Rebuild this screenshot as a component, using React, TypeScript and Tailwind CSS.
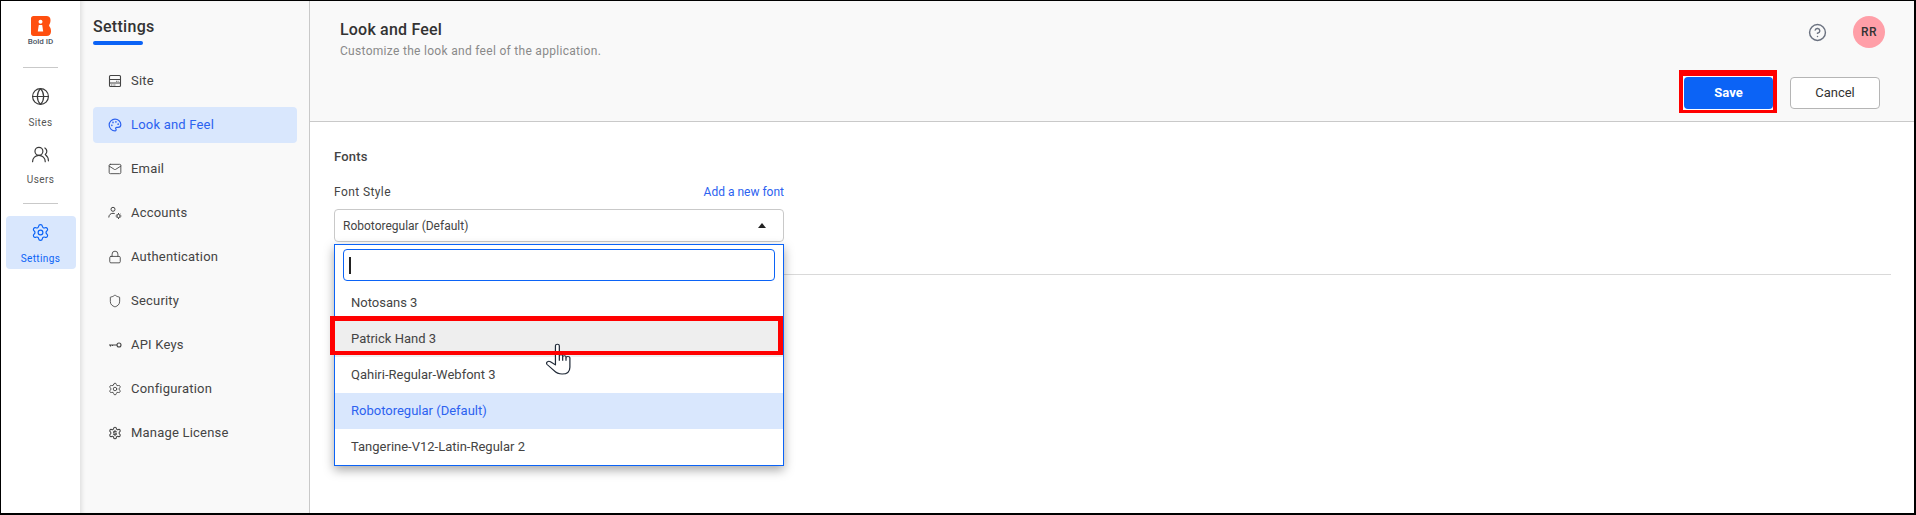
import { CircleHelp, Globe, Lock, Mail, Palette, Settings, Shield, UsersRound } from 'lucide-react';
import type { ReactNode } from 'react';

const SiteIcon = () => (
  <svg width="14" height="14" viewBox="0 0 14 14" fill="none" stroke="currentColor" strokeWidth="1.1">
    <rect x="1.5" y="1.5" width="11" height="11" rx="1" />
    <path d="M1.5 5.5h11M1.5 9h11" />
    <path d="M8 7.3h3M3 11h5" strokeDasharray="1 0.6" strokeWidth="0.8" />
  </svg>
);

const AccountsIcon = () => (
  <svg width="14" height="14" viewBox="0 0 14 14" fill="none" stroke="currentColor" strokeWidth="1">
    <circle cx="5" cy="3.3" r="2" />
    <path d="M0.8 11.5c0-2.6 1.8-4.2 4.2-4.2 0.6 0 1.2 0.1 1.7 0.3" />
    <circle cx="10.5" cy="10" r="1.6" />
    <path d="M10.5 7v1M10.5 12v1M7.6 10h1M12.4 10h1M8.5 8l0.7 0.7M11.8 11.3l0.7 0.7M8.5 12l0.7-0.7M11.8 8.7l0.7-0.7" />
  </svg>
);

const KeyIcon = () => (
  <svg width="14" height="14" viewBox="0 0 14 14" fill="none" stroke="currentColor" strokeWidth="1.1">
    <circle cx="11" cy="7" r="2" />
    <path d="M9 7H1M2.5 7v1.6M4.5 7v1" />
  </svg>
);

const LicenseIcon = () => (
  <svg width="14" height="14" viewBox="0 0 24 24" fill="none" stroke="currentColor" strokeWidth="1.8" strokeLinecap="round" strokeLinejoin="round">
    <path d="M9.67 4.14a2.34 2.34 0 0 1 4.66 0 2.34 2.34 0 0 0 3.32 1.91 2.34 2.34 0 0 1 2.33 4.04 2.34 2.34 0 0 0 0 3.82 2.34 2.34 0 0 1-2.33 4.04 2.34 2.34 0 0 0-3.32 1.91 2.34 2.34 0 0 1-4.66 0 2.34 2.34 0 0 0-3.32-1.91 2.34 2.34 0 0 1-2.33-4.04 2.34 2.34 0 0 0 0-3.82 2.34 2.34 0 0 1 2.33-4.04 2.34 2.34 0 0 0 3.32-1.91z" />
    <path d="M12 7.500v1.500M12 15v1.500M9.500 14c0.500 0.700 1.400 1 2.500 1 1.300 0 2.500-0.500 2.500-1.500 0-2.200-5-0.800-5-3 0-1 1.100-1.500 2.500-1.500 1 0 1.900 0.400 2.300 1" />
  </svg>
);

const BoldLogo = () => (
  <svg width="20" height="20" viewBox="0 0 20 20">
    <path d="M2.500 0H15.500C17.800 0 19.500 1.500 19.500 4C19.500 6 19 7.500 18.300 8.700C18 9.300 18 9.800 18.300 10.300C19.300 11.500 20 13 20 15.500C20 18 18.500 20 15.500 20H2.500C1 20 0 19 0 17.500V2.500C0 1 1 0 2.500 0Z" fill="#ff4f0f" />
    <circle cx="9.500" cy="5.800" r="2" fill="#fff" />
    <path d="M7.800 9H11.200L12.200 15.500H6.800Z" fill="#fff" />
  </svg>
);

const HandCursor = () => (
  <svg width="25" height="32" viewBox="0.500 0.500 22.500 35" preserveAspectRatio="none" fill="#fff" stroke="#1f2937" strokeWidth="1.100" strokeLinejoin="round">
    <path d="M9 21V3.500C9 1.500 12.500 1.500 12.500 3.500V14.500C12.500 13 15.500 13 15.500 14.500V15.500C15.500 14 18.500 14 18.500 15.500V16.500C18.500 15 22 15 22 16.500V27C22 32 19 34.500 15 34.500C11.500 34.500 9.500 33 7.500 30.500L1.500 24C0 22 2.500 19.500 4.500 21L9 24.500Z" />
    <path d="M12.500 14.500V20M15.500 15.500V20M18.500 16.500V20" fill="none" />
  </svg>
);

const railItems: { label: string; icon: ReactNode; active?: boolean }[] = [
  { label: 'Sites', icon: <Globe size={19} strokeWidth={1.5} /> },
  { label: 'Users', icon: <UsersRound size={19} strokeWidth={1.5} /> },
];

const menuItems: { label: string; icon: ReactNode; active?: boolean }[] = [
  { label: 'Site', icon: <SiteIcon /> },
  { label: 'Look and Feel', icon: <Palette size={14} strokeWidth={2} />, active: true },
  { label: 'Email', icon: <Mail size={14} strokeWidth={1.5} /> },
  { label: 'Accounts', icon: <AccountsIcon /> },
  { label: 'Authentication', icon: <Lock size={14} strokeWidth={1.5} /> },
  { label: 'Security', icon: <Shield size={14} strokeWidth={1.5} /> },
  { label: 'API Keys', icon: <KeyIcon /> },
  { label: 'Configuration', icon: <Settings size={14} strokeWidth={1.5} /> },
  { label: 'Manage License', icon: <LicenseIcon /> },
];

const fontOptions = ['Notosans 3', 'Patrick Hand 3', 'Qahiri-Regular-Webfont 3', 'Robotoregular (Default)', 'Tangerine-V12-Latin-Regular 2'];

export default function App() {
  return (
    <div className="flex h-[515px] w-[1916px] overflow-hidden border-t border-l border-r-2 border-b-2 border-black bg-white font-['Roboto',sans-serif] text-[#3a3a3a]">
      {/* Icon rail */}
      <aside className="flex w-[79px] shrink-0 flex-col items-center bg-white pt-[15px]">
        <BoldLogo />
        <span className="mt-px text-[8px] font-medium leading-[10px] text-[#4b5563]">Bold ID</span>
        <div className="mt-[20px] h-px w-[35px] bg-[#c9c9c9]" />
        {railItems.map((item, i) => (
          <div key={item.label} className={`flex flex-col items-center ${i === 0 ? 'mt-[19px]' : 'mt-[15px]'}`}>
            {item.icon}
            <span className={`${i === 0 ? 'mt-[10px]' : 'mt-[9px]'} text-[10px] leading-[14px] tracking-[0.4px] text-[#555]`}>{item.label}</span>
          </div>
        ))}
        <div className="mt-[16px] h-px w-[35px] bg-[#c9c9c9]" />
        <div className="mt-[12px] flex h-[53px] w-[70px] flex-col items-center rounded bg-[#d9e7fd] pt-[7px] text-[#0b63f6]">
          <Settings size={19} strokeWidth={1.5} />
          <span className="mt-[10px] text-[10px] leading-[14px] tracking-[0.4px]">Settings</span>
        </div>
      </aside>

      {/* Settings menu */}
      <nav className="w-[230px] shrink-0 border-r border-[#c9c9c9] bg-[#f9f9f9] px-[13px] pt-[17px] shadow-[inset_4px_0_4px_-2px_rgba(0,0,0,0.1)]">
        <h2 className="text-[16px] font-medium leading-[18px] tracking-[0.3px] text-[#333]">Settings</h2>
        <div className="mt-[5px] h-[4px] w-[50px] rounded-sm bg-[#0b63f6]" />
        <ul className="mt-[18px] flex w-[204px] flex-col gap-[8px]">
          {menuItems.map((item) => (
            <li
              key={item.label}
              className={`flex h-[36px] items-center gap-[9px] rounded pl-[15px] text-[13px] tracking-[0.2px] ${item.active ? 'bg-[#d9e7fd] text-[#2c62f0]' : 'text-[#444]'}`}
            >
              <span className="flex w-[14px] justify-center">{item.icon}</span>
              {item.label}
            </li>
          ))}
        </ul>
      </nav>

      {/* Main */}
      <main className="min-w-0 flex-1">
        <header className="h-[121px] border-b border-[#c9c9c9] bg-[#f9f9f9] pl-[30px] pr-[34px] pt-[19px]">
          <div className="flex h-[36px] items-start justify-between">
            <div>
              <h1 className="text-[16px] font-medium leading-[20px] tracking-[0.2px] text-[#333]">Look and Feel</h1>
              <p className="mt-[4px] text-[12px] leading-[14px] tracking-[0.3px] text-[#8a8a8a]">Customize the look and feel of the application.</p>
            </div>
            <div className="-mt-[4px] mr-[-5px] flex items-center gap-[26px]">
              <CircleHelp size={19} strokeWidth={1.8} className="text-[#6b7280]" />
              <div className="flex h-[32px] w-[32px] items-center justify-center rounded-full bg-[#ff9fa8] text-[12px] font-medium tracking-[0.5px] text-[#333]">RR</div>
            </div>
          </div>
          <div className="mt-[21px] flex justify-end gap-[17px]">
            <div className="relative">
              <button className="h-[32px] w-[89px] rounded bg-[#0b63f6] text-[13px] font-bold text-white ring-1 ring-white">Save</button>
              <div className="absolute -bottom-[4px] -left-[5px] -right-[4px] -top-[7px] border-x-[4px] border-b-[3px] border-t-[6px] border-[#f00]" />
            </div>
            <button className="h-[32px] w-[90px] rounded border border-[#b5b5b5] bg-white text-[13px] text-[#333]">Cancel</button>
          </div>
        </header>

        <section className="pl-[24px] pr-[23px] pt-[27px]">
          <h3 className="text-[13px] font-medium leading-[16px] tracking-[0.2px] text-[#444]">Fonts</h3>
          <div className="relative mt-[19px] w-[450px]">
            <div className="flex items-center justify-between">
              <label className="text-[12px] leading-[16px] tracking-[0.4px] text-[#444]">Font Style</label>
              <a className="-mt-px text-[12px] leading-[16px] text-[#2c62f0]">Add a new font</a>
            </div>
            <div className="mt-[9px] flex h-[33px] items-center justify-between rounded border border-[#c9c9c9] bg-white pl-[8px] pr-[17px] text-[12px] text-[#444]">
              Robotoregular (Default)
              <span className="h-0 w-0 border-x-[4.500px] border-b-[5px] border-x-transparent border-b-[#222]" />
            </div>

            {/* Open dropdown */}
            <div className="absolute left-0 top-[60px] z-10 w-[450px] border border-[#0b63f6] bg-white shadow-[0_4px_10px_rgba(0,0,0,0.35)]">
              <div className="px-[8px] pb-[4px] pt-[4px]">
                <div className="flex h-[32px] items-center rounded border border-[#0b63f6] pl-[5px]">
                  <span className="h-[17px] w-[2px] bg-[#222]" />
                </div>
              </div>
              {fontOptions.map((name) => (
                <div
                  key={name}
                  className={`relative flex h-[36px] items-center pl-[16px] text-[13px] ${
                    name === 'Patrick Hand 3'
                      ? 'bg-[#eeeeee] text-[#444]'
                      : name.startsWith('Roboto')
                        ? 'bg-[#d9e7fd] text-[#2c62f0]'
                        : 'text-[#444]'
                  }`}
                >
                  {name}
                  {name === 'Patrick Hand 3' && <div className="absolute -left-[5px] -top-[5px] bottom-[2px] right-0 z-20 border-[5px] border-b-[4px] border-[#f00]" />}
                </div>
              ))}
              <div className="absolute left-[211px] top-[98px] z-10">
                <HandCursor />
              </div>
            </div>
          </div>
          <div className="mt-[32px] h-px bg-[#d9d9d9]" />
        </section>
      </main>
    </div>
  );
}
